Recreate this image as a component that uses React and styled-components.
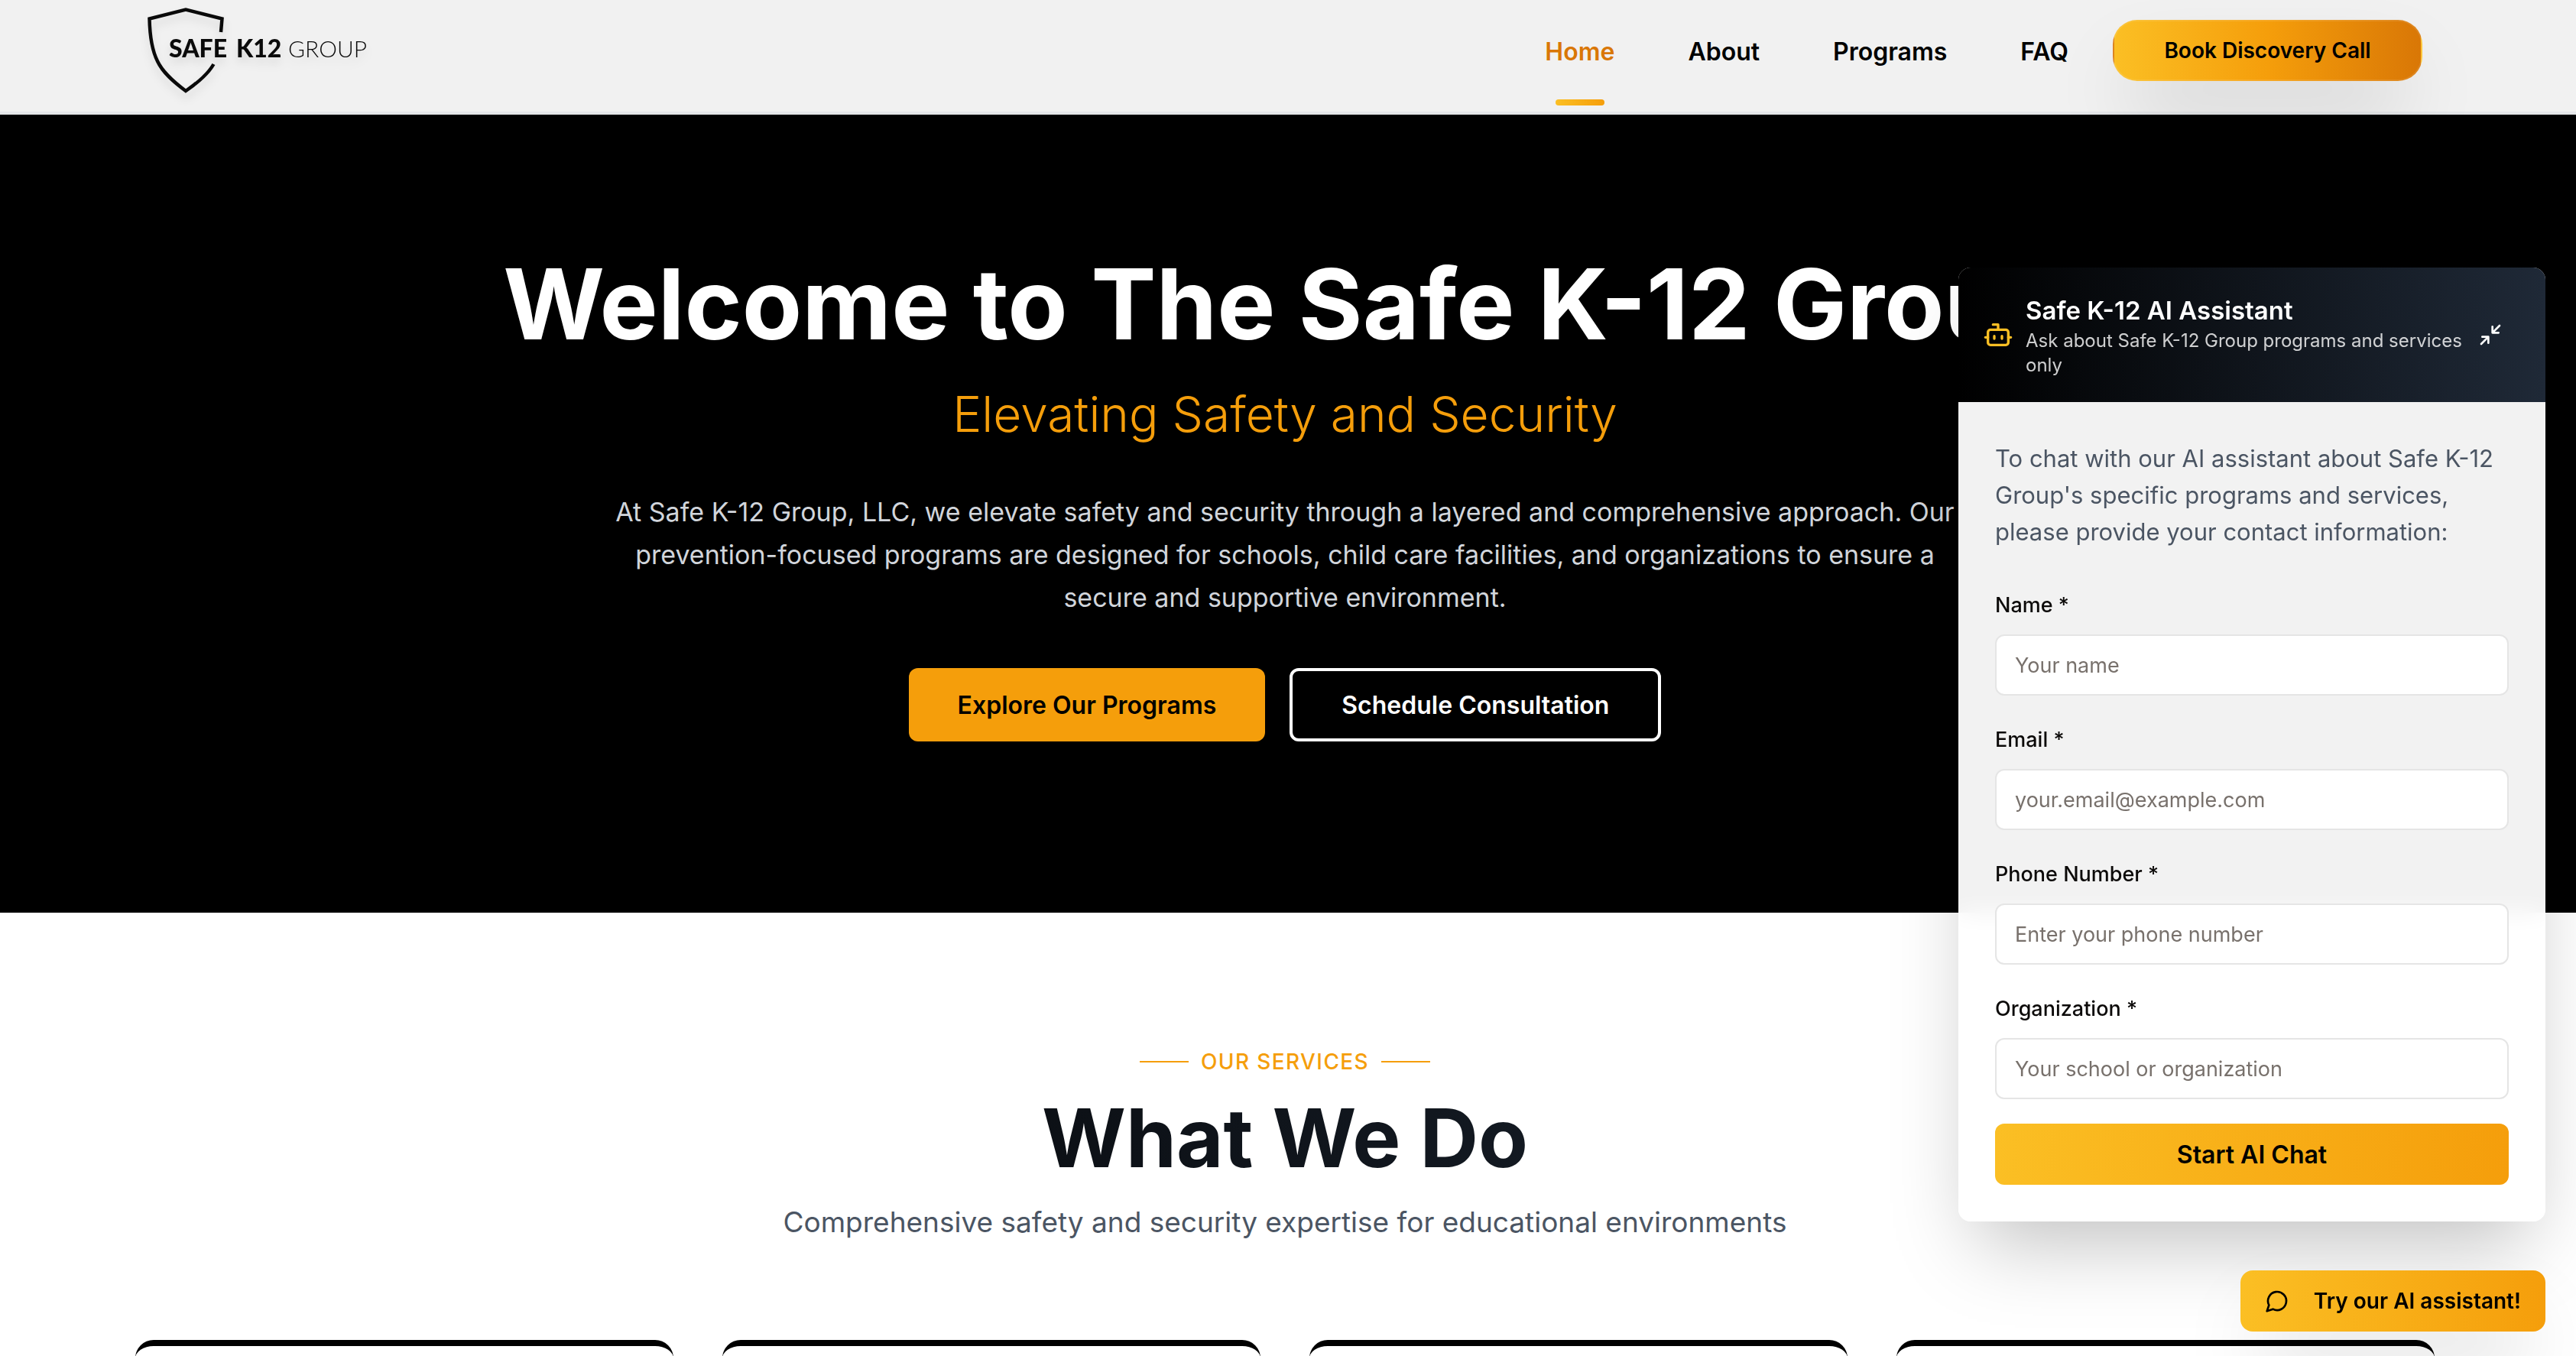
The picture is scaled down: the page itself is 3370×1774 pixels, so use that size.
import React from "react";
import styled, { createGlobalStyle, css } from "styled-components";

const GlobalStyle = createGlobalStyle`
  *, *::before, *::after { box-sizing: border-box; }
  body { margin: 0; background: #fff; color: #000; font-family: Inter, "Liberation Sans", sans-serif; font-size: 32px; line-height: 48px; }
  h1, h2, h3, p { margin: 0; }
  a { color: inherit; text-decoration: none; }
  button, input { font-family: inherit; }
`;

const GUTTER = "8px";
const SHADOW = "0 50px 100px -24px rgba(0, 0, 0, 0.25)";

const Page = styled.div`
  height: 100vh;
  overflow: hidden;
`;

const Header = styled.header`
  height: 150px;
  padding-right: ${GUTTER};
  background: #f1f1f1;
  border-bottom: 4px solid #e5e7e9;
`;

const HeaderInner = styled.div`
  max-width: 3072px;
  margin: 0 auto;
  padding: 0 48px;
  display: flex;
  align-items: flex-start;
  justify-content: space-between;
`;

const Logo = styled.svg`
  display: block;
  width: 300px;
  height: 132px;
  filter: drop-shadow(0 8px 6px rgba(0, 0, 0, 0.1));
`;

const Nav = styled.nav`
  display: flex;
  align-items: center;
  gap: 32px;
  padding-top: 26px;
`;

const NavLink = styled.a`
  position: relative;
  padding: 18px 32px 14px;
  font-size: 32px;
  line-height: 48px;
  font-weight: 600;
  color: ${(p) => (p.$active ? "#d97706" : "#000")};
  ${(p) =>
    p.$active &&
    css`
      &::after {
        content: "";
        position: absolute;
        left: 50%;
        bottom: -32px;
        width: 64px;
        height: 8px;
        margin-left: -32px;
        border-radius: 4px;
        background: linear-gradient(to right, #fbbf24, #f59e0b);
      }
    `}
`;

const BookButton = styled.button`
  height: 80px;
  min-width: 405px;
  margin-left: -6px;
  padding: 0 64px;
  border: 2px solid rgba(255, 255, 255, 0.1);
  border-radius: 32px;
  background: linear-gradient(to right, #fbbf24, #f59e0b, #d97706);
  box-shadow: ${SHADOW};
  font-size: 28px;
  font-weight: 600;
  color: #000;
`;

const Hero = styled.section`
  padding: 168px ${GUTTER} 224px 0;
  background: #000;
  text-align: center;
`;

const HeroTitle = styled.h1`
  font-size: 128px;
  line-height: 160px;
  font-weight: 700;
  color: #fff;
  white-space: nowrap;
`;

const HeroSubtitle = styled.p`
  margin-top: 24px;
  font-size: 64px;
  line-height: 80px;
  font-weight: 300;
  color: #f59e0b;
`;

const HeroText = styled.p`
  max-width: 1792px;
  margin: 60px auto 0;
  font-size: 34px;
  line-height: 56px;
  color: #d1d5db;
`;

const Actions = styled.div`
  display: flex;
  justify-content: center;
  gap: 32px;
  margin-top: 64px;
`;

const ActionButton = styled.button`
  height: 96px;
  padding: 0 64px;
  border: ${(p) => (p.$outline ? "4px solid #fff" : "0")};
  border-radius: 12px;
  background: ${(p) => (p.$outline ? "transparent" : "#f59e0b")};
  color: ${(p) => (p.$outline ? "#fff" : "#000")};
  font-size: 32px;
  font-weight: 600;
`;

const Services = styled.section`
  padding: 171px ${GUTTER} 0 0;
`;

const ServicesInner = styled.div`
  max-width: 3072px;
  margin: 0 auto;
  padding: 0 32px;
  text-align: center;
`;

const Eyebrow = styled.div`
  display: flex;
  justify-content: center;
  align-items: center;
  gap: 16px;
  font-size: 28px;
  line-height: 48px;
  font-weight: 500;
  letter-spacing: 0.05em;
  color: #f59e0b;

  &::before, &::after {
    content: "";
    width: 64px;
    height: 2px;
    background: #f59e0b;
  }
`;

const SectionTitle = styled.h2`
  margin-top: 16px;
  font-size: 106px;
  line-height: 120px;
  font-weight: 700;
  color: transparent;
  background: linear-gradient(to right, #000, #1f2937);
  background-clip: text;
  -webkit-background-clip: text;
`;

const SectionText = styled.p`
  margin-top: 22px;
  font-size: 37px;
  line-height: 56px;
  color: #4b5563;
`;

const Cards = styled.div`
  display: grid;
  grid-template-columns: repeat(4, 1fr);
  gap: 64px;
  margin-top: 126px;
`;

const Card = styled.article`
  min-height: 480px;
  border-top: 8px solid #000;
  border-radius: 24px;
  background: #fff;
`;

const ChatPanel = styled.aside`
  position: fixed;
  right: 40px;
  bottom: 176px;
  width: 768px;
  border-radius: 16px;
  overflow: hidden;
  background: rgba(255, 255, 255, 0.95);
  backdrop-filter: blur(16px);
  box-shadow: ${SHADOW};
`;

const ChatHeader = styled.div`
  display: flex;
  align-items: center;
  min-height: 176px;
  padding: 32px 40px 32px 32px;
  background: linear-gradient(to right, #000, #1f2937);
  color: #fff;
`;

const BotIcon = styled.svg`
  flex: none;
  width: 40px;
  height: 40px;
  margin-right: 16px;
  color: #fbbf24;
`;

const ChatHeading = styled.div`
  flex: 1;
`;

const ChatTitle = styled.h3`
  font-size: 33px;
  line-height: 48px;
  font-weight: 600;
`;

const ChatNote = styled.p`
  font-size: 24px;
  line-height: 32px;
  opacity: 0.8;
`;

const MinimizeButton = styled.button`
  flex: none;
  display: grid;
  place-items: center;
  width: 64px;
  height: 64px;
  padding: 0;
  border: 0;
  background: none;
  color: #fff;
`;

const ChatForm = styled.form`
  display: flex;
  flex-direction: column;
  gap: 32px;
  padding: 48px;
`;

const Intro = styled.p`
  padding: 2px 0 14px;
  font-size: 31px;
  color: #4b5563;
`;

const Field = styled.div`
  display: flex;
  flex-direction: column;
  gap: 14px;
`;

const Label = styled.label`
  padding-top: 2px;
  font-size: 27px;
  line-height: 48px;
  font-weight: 500;
  color: #0c0a09;
`;

const Input = styled.input`
  width: 100%;
  height: 80px;
  padding: 0 24px;
  border: 2px solid #e5e5e5;
  border-radius: 12px;
  background: #fff;
  font-size: 27px;

  &::placeholder { color: #78716c; opacity: 1; }
`;

const SubmitButton = styled.button`
  height: 80px;
  border: 0;
  border-radius: 12px;
  background: linear-gradient(to right, #fbbf24, #f59e0b);
  font-size: 32px;
  font-weight: 600;
  color: #000;
`;

const Launcher = styled.button`
  position: fixed;
  right: 40px;
  bottom: 32px;
  display: flex;
  align-items: center;
  gap: 32px;
  height: 80px;
  padding: 0 32px;
  border: 0;
  border-radius: 16px;
  background: linear-gradient(to right, #fbbf24, #f59e0b);
  box-shadow: ${SHADOW};
  font-size: 28px;
  font-weight: 600;
  color: #000;
`;

const stroke = {
  viewBox: "0 0 24 24",
  fill: "none",
  stroke: "currentColor",
  strokeWidth: 2,
  strokeLinecap: "round",
  strokeLinejoin: "round",
  "aria-hidden": true,
};

const links = ["Home", "About", "Programs", "FAQ"];

const fields = [
  { id: "name", label: "Name *", placeholder: "Your name", type: "text" },
  { id: "email", label: "Email *", placeholder: "your.email@example.com", type: "email" },
  { id: "phone", label: "Phone Number *", placeholder: "Enter your phone number", type: "tel" },
  { id: "organization", label: "Organization *", placeholder: "Your school or organization", type: "text" },
];

export default function App() {
  return (
    <Page>
      <GlobalStyle />
      <Header>
        <HeaderInner>
          <a href="#home" aria-label="Safe K12 Group">
            <Logo viewBox="0 0 300 132">
              <path
                d="M96 42 L97.500 24.500 L50 12.500 L2.500 24.500 C3 48 7 68 13 80 C20 95 34 107 50 119 C66 108 79 97 86.500 84"
                fill="none"
                stroke="#0a0a0a"
                strokeWidth="4.500"
              />
              <g fill="#0a0a0a" fontFamily="Lato">
                <text x="28" y="75" fontSize="32" fontWeight="900">SAFE</text>
                <text x="116" y="75" fontSize="32" fontWeight="900">K12</text>
                <text x="184" y="75" fontSize="30" fontWeight="300">GROUP</text>
              </g>
            </Logo>
          </a>
          <Nav>
            {links.map((name) => (
              <NavLink key={name} href={`#${name.toLowerCase()}`} $active={name === "Home"}>
                {name}
              </NavLink>
            ))}
            <BookButton type="button">Book Discovery Call</BookButton>
          </Nav>
        </HeaderInner>
      </Header>

      <Hero>
        <HeroTitle>Welcome to The Safe K-12 Group</HeroTitle>
        <HeroSubtitle>Elevating Safety and Security</HeroSubtitle>
        <HeroText>
          At Safe K-12 Group, LLC, we elevate safety and security through a layered and
          comprehensive approach. Our prevention-focused programs are designed for schools, child
          care facilities, and organizations to ensure a secure and supportive environment.
        </HeroText>
        <Actions>
          <ActionButton type="button">Explore Our Programs</ActionButton>
          <ActionButton type="button" $outline>Schedule Consultation</ActionButton>
        </Actions>
      </Hero>

      <Services>
        <ServicesInner>
          <Eyebrow>OUR SERVICES</Eyebrow>
          <SectionTitle>What We Do</SectionTitle>
          <SectionText>
            Comprehensive safety and security expertise for educational environments
          </SectionText>
          <Cards>
            <Card />
            <Card />
            <Card />
            <Card />
          </Cards>
        </ServicesInner>
      </Services>

      <ChatPanel>
        <ChatHeader>
          <BotIcon {...stroke}>
            <path d="M12 8V4H8" />
            <rect width="16" height="12" x="4" y="8" rx="2" />
            <path d="M2 14h2M20 14h2M15 13v2M9 13v2" />
          </BotIcon>
          <ChatHeading>
            <ChatTitle>Safe K-12 AI Assistant</ChatTitle>
            <ChatNote>Ask about Safe K-12 Group programs and services only</ChatNote>
          </ChatHeading>
          <MinimizeButton type="button" aria-label="Minimize chat">
            <svg {...stroke} width="32" height="32">
              <path d="M4 14h6v6M20 10h-6V4M14 10l7-7M3 21l7-7" />
            </svg>
          </MinimizeButton>
        </ChatHeader>
        <ChatForm>
          <Intro>
            To chat with our AI assistant about Safe K-12 Group's specific programs and services,
            please provide your contact information:
          </Intro>
          {fields.map((f) => (
            <Field key={f.id}>
              <Label htmlFor={f.id}>{f.label}</Label>
              <Input id={f.id} type={f.type} placeholder={f.placeholder} />
            </Field>
          ))}
          <SubmitButton type="button">Start AI Chat</SubmitButton>
        </ChatForm>
      </ChatPanel>

      <Launcher type="button">
        <svg {...stroke} width="32" height="32">
          <path d="M7.900 20A9 9 0 1 0 4 16.100L2 22Z" />
        </svg>
        Try our AI assistant!
      </Launcher>
    </Page>
  );
}
